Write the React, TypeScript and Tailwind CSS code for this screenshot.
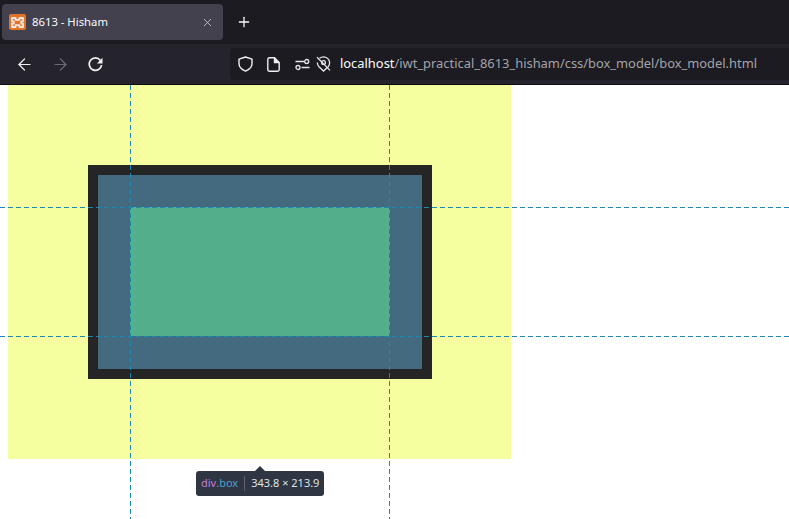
import { ArrowLeft, ArrowRight, Plus, X } from 'lucide-react';

function ShieldIcon() {
  return (
    <svg width="15" height="16" viewBox="0 0 15 16" fill="none" stroke="#f0f0f3" strokeWidth="1.4">
      <path d="M7.5 1 1 3.2v4.3c0 3.6 3 6.2 6.5 7.6C11 13.7 14 11.1 14 7.5V3.2z" strokeLinejoin="round" />
    </svg>
  );
}

function PageIcon() {
  return (
    <svg width="13" height="15" viewBox="0 0 13 15" fill="none" stroke="#f0f0f3" strokeWidth="1.4">
      <path d="M2.5.8h5l4.7 4.7v7a1.7 1.7 0 0 1-1.7 1.7h-8A1.7 1.7 0 0 1 .8 12.5v-10A1.7 1.7 0 0 1 2.5.8z" />
      <path d="M7.5.8v4.7h4.7" fill="#f0f0f3" />
    </svg>
  );
}

function PermissionsIcon() {
  return (
    <svg width="15" height="13" viewBox="0 0 15 13" fill="none" stroke="#e6e6ea" strokeWidth="1.3">
      <path d="M.5 3.5h8.5M6.5 9.5h8" />
      <circle cx="11.7" cy="3.5" r="2" />
      <circle cx="3" cy="9.5" r="2" />
    </svg>
  );
}

function BlockedLocationIcon() {
  return (
    <svg width="15" height="16" viewBox="0 0 15 16" fill="none" stroke="#e6e6ea" strokeWidth="1.3">
      <path d="M3.6 2.2A6.2 6.2 0 0 1 13.6 7c0 1.5-.5 2.8-1.4 3.7L7.5 15 3 10.8A6.2 6.2 0 0 1 1.3 6.4" />
      <circle cx="7.5" cy="6.5" r="1.9" />
      <path d="M1 1.2 14 14.4" />
    </svg>
  );
}

function ReloadIcon() {
  return (
    <svg width="15" height="15" viewBox="0 0 15 15" fill="none" stroke="#f0f0f3" strokeWidth="1.7">
      <path d="M12.4 3.4A6.2 6.2 0 1 0 13.6 8" />
      <path d="M14.5.8v5.6H8.9z" fill="#f0f0f3" stroke="none" />
    </svg>
  );
}

function XamppIcon() {
  return (
    <div className="w-[17px] h-[16px] rounded-[2px] bg-[#e2732b] flex items-center justify-center">
      <svg width="13" height="11" viewBox="0 0 13 11" fill="none" stroke="#fbeadd" strokeWidth="1.8">
        <path d="M1 1h3.6v1.8h3.8V1H12v3.4h-1.8v2.2H12V10H8.4V8.2H4.6V10H1V6.6h1.8V4.4H1z" strokeLinejoin="round" />
      </svg>
    </div>
  );
}

function TabBar() {
  return (
    <div className="h-[44px] bg-[#1c1b22] flex items-center pl-[2px]">
      <div className="w-[221px] h-[36px] rounded-[4px] bg-[#42414d] flex items-center pl-[7px] pr-[9px]">
        <XamppIcon />
        <span className="ml-[6px] text-[11.3px] text-[#fbfbfe] flex-1 font-['Noto_Sans',sans-serif]">8613 - Hisham</span>
        <X size={13} strokeWidth={1.4} className="text-[#d8d8dc]" />
      </div>
      <Plus size={16} strokeWidth={1.9} className="ml-[13px] text-[#fbfbfe]" />
    </div>
  );
}

function NavBar() {
  return (
    <div className="h-[41px] bg-[#25242c] border-b border-b-[#0c0c0f] flex items-center">
      <ArrowLeft size={19} strokeWidth={1.5} className="ml-[15px] text-[#f0f0f3]" />
      <ArrowRight size={19} strokeWidth={1.5} className="ml-[17px] text-[#6b6a72]" />
      <div className="ml-[18px]"><ReloadIcon /></div>
      <div className="ml-[127px] flex-1 h-[32px] rounded-l-[4px] bg-[#1c1b22] flex items-center pl-[8px]">
        <ShieldIcon />
        <div className="ml-[14px]"><PageIcon /></div>
        <div className="ml-[15px]"><PermissionsIcon /></div>
        <div className="ml-[6px]"><BlockedLocationIcon /></div>
        <span className="ml-[9px] text-[12.9px] text-[#fbfbfe] whitespace-nowrap font-['Noto_Sans',sans-serif]">
          localhost<span className="text-[#a3a3a8]">/iwt_practical_8613_hisham/css/box_model/box_model.html</span>
        </span>
      </div>
    </div>
  );
}

function Tooltip() {
  return (
    <div className="absolute left-[196px] top-[386px] h-[25px] w-[128px] rounded-[3px] bg-[#2f3542] flex items-center pl-[5px] text-[11px] font-['Noto_Sans',sans-serif]">
      <div className="absolute left-[59px] top-[-5px] w-0 h-0 border-x-[5px] border-x-transparent border-b-[5px] border-b-[#2f3542]" />
      <span className="text-[#c37bd6]">div</span>
      <span className="text-[#4aa3d0]">.box</span>
      <span className="mx-[6px] w-px h-[15px] bg-[#5b6170]" />
      <span className="text-[#dfe3ea]">343.8 × 213.9</span>
    </div>
  );
}

export default function App() {
  return (
    <div className="w-[789px] h-[519px] overflow-hidden bg-white font-['Inter',sans-serif]">
      <TabBar />
      <NavBar />
      <div className="relative h-[434px] overflow-hidden">
        <div className="ml-[8px] w-[503px] h-[374px] bg-[#f5ff9f] pl-[80px] pt-[80px]">
          <div className="w-[344px] h-[214px] border-[10px] border-[#252525] bg-[#436a7e] pl-[32px] pt-[32px]">
            <div className="w-[260px] h-[129px] bg-[#53ae8b]" />
          </div>
        </div>
        <div className="absolute left-[130px] top-0 h-full w-px bg-[repeating-linear-gradient(180deg,#1f86ad_0,#1f86ad_5px,transparent_5px,transparent_8px)]" />
        <div className="absolute left-[389px] top-0 h-full w-px bg-[repeating-linear-gradient(180deg,#1f86ad_0,#1f86ad_5px,transparent_5px,transparent_8px)]" />
        <div className="absolute left-0 top-[122px] w-full h-px bg-[repeating-linear-gradient(90deg,#1f86ad_0,#1f86ad_5px,transparent_5px,transparent_8px)]" />
        <div className="absolute left-0 top-[251px] w-full h-px bg-[repeating-linear-gradient(90deg,#1f86ad_0,#1f86ad_5px,transparent_5px,transparent_8px)]" />
        <Tooltip />
      </div>
    </div>
  );
}
